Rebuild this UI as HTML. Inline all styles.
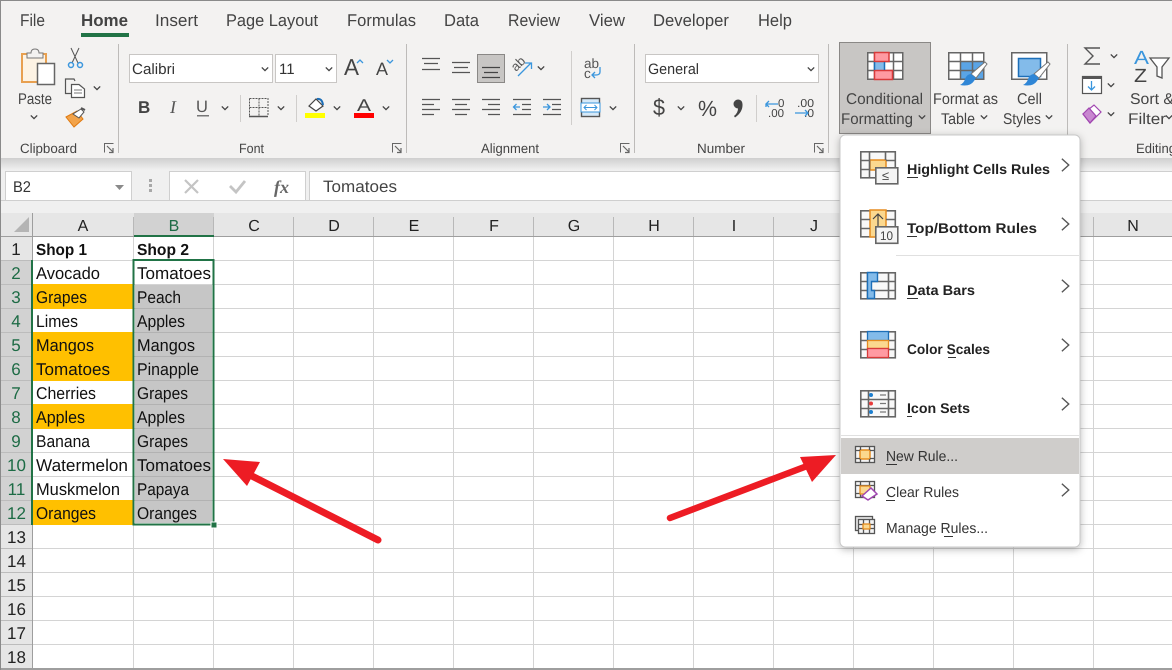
<!DOCTYPE html>
<html><head><meta charset="utf-8"><style>
html,body{margin:0;padding:0;background:#fff;width:1172px;height:670px;overflow:hidden}
svg{display:block}
text{font-family:"Liberation Sans",sans-serif}
</style></head><body>
<svg width="1172" height="670" viewBox="0 0 1172 670" xmlns="http://www.w3.org/2000/svg" text-rendering="geometricPrecision">
<defs>
<linearGradient id="sh" x1="0" y1="0" x2="0" y2="1"><stop offset="0" stop-color="#cfcfcf"/><stop offset="1" stop-color="#f0f0f0"/></linearGradient>
<filter id="ds" x="-10%" y="-10%" width="120%" height="120%"><feDropShadow dx="0" dy="2" stdDeviation="4" flood-color="#000" flood-opacity=".28"/></filter>
<path id="c" d="M-3.200-1.600L0 1.600L3.200-1.600" fill="none" stroke="#444" stroke-width="1.300"/>
<path id="g" d="M-2.500-5L3 0L-2.500 5" fill="none" stroke="#555" stroke-width="1.100" transform="scale(1.25)"/>
<g id="dl" fill="none" stroke="#666"><path d="M.5 9.500V.5H9.500" stroke-width="1"/><path d="M3 3L9 9M9 5V9.500H5" stroke-width="1.200"/></g>
</defs>

<!-- page backgrounds -->
<rect width="1172" height="670" fill="#fff"/>
<rect x="0" y="0" width="1172" height="158" fill="#f3f2f1"/>
<rect x="0" y="158" width="1172" height="12" fill="url(#sh)"/>
<rect x="0" y="170" width="1172" height="43" fill="#f0f0f0"/>

<!-- tabs -->
<g font-size="17" fill="#444">
<text x="20" y="26" textLength="25" lengthAdjust="spacingAndGlyphs">File</text>
<text x="81" y="26" textLength="47" lengthAdjust="spacingAndGlyphs" font-weight="700">Home</text>
<text x="155" y="26" textLength="43" lengthAdjust="spacingAndGlyphs">Insert</text>
<text x="226" y="26" textLength="92" lengthAdjust="spacingAndGlyphs">Page Layout</text>
<text x="347" y="26" textLength="69" lengthAdjust="spacingAndGlyphs">Formulas</text>
<text x="444" y="26" textLength="35" lengthAdjust="spacingAndGlyphs">Data</text>
<text x="508" y="26" textLength="52" lengthAdjust="spacingAndGlyphs">Review</text>
<text x="589" y="26" textLength="36" lengthAdjust="spacingAndGlyphs">View</text>
<text x="653" y="26" textLength="76" lengthAdjust="spacingAndGlyphs">Developer</text>
<text x="758" y="26" textLength="34" lengthAdjust="spacingAndGlyphs">Help</text>
</g>
<rect x="81" y="33" width="48" height="4" fill="#217346"/>

<!-- group separators -->
<g fill="#bdbbb9">
<rect x="118" y="44" width="1" height="109"/><rect x="406" y="44" width="1" height="109"/>
<rect x="634" y="44" width="1" height="109"/><rect x="828" y="44" width="1" height="109"/>
<rect x="1067" y="44" width="1" height="109"/>
<rect x="240" y="95" width="1" height="27" fill="#d0cecc"/><rect x="296" y="95" width="1" height="27" fill="#d0cecc"/>
<rect x="571" y="51" width="1" height="74" fill="#d0cecc"/><rect x="756" y="95" width="1" height="27" fill="#d0cecc"/>
</g>

<!-- group labels -->
<g font-size="13.500" fill="#444">
<text x="20" y="153" textLength="57" lengthAdjust="spacingAndGlyphs">Clipboard</text>
<text x="239" y="153" textLength="25" lengthAdjust="spacingAndGlyphs">Font</text>
<text x="481" y="153" textLength="58" lengthAdjust="spacingAndGlyphs">Alignment</text>
<text x="697" y="153" textLength="48" lengthAdjust="spacingAndGlyphs">Number</text>
<text x="1136" y="153" textLength="40" lengthAdjust="spacingAndGlyphs">Editing</text>
</g>
<use href="#dl" x="104" y="143"/><use href="#dl" x="392" y="143"/><use href="#dl" x="620" y="143"/><use href="#dl" x="814" y="143"/>

<!-- clipboard group -->
<rect x="22" y="54" width="24" height="28" fill="#fdf3e4" stroke="#e8a050" stroke-width="2"/>
<path d="M27 58V53H31Q31 49 35 49Q39 49 39 53H43V58Z" fill="#f3f2f1" stroke="#777" stroke-width="1"/>
<rect x="37.500" y="63.500" width="17" height="21" fill="#fff" stroke="#666" stroke-width="1.500"/>
<text x="18" y="104" font-size="15.500" fill="#444" textLength="34" lengthAdjust="spacingAndGlyphs">Paste</text>
<use href="#c" x="34" y="117"/>
<g fill="none">
<path d="M71 48L78 63M79 48L72 63" stroke="#555" stroke-width="1"/>
<circle cx="71" cy="65" r="2.500" stroke="#3a96dd" stroke-width="1.500"/><circle cx="80" cy="65" r="2.500" stroke="#3a96dd" stroke-width="1.500"/>
<path d="M72.500 93.500H65.500V79H74L75 81" stroke="#555" stroke-width="1.200" fill="#f3f2f1"/>
<path d="M71.500 84.500H79L84.500 89V97.500H71.500Z" stroke="#555" stroke-width="1.200" fill="#fff"/>
<path d="M74 90H82M74 93H82" stroke="#777"/>
</g>
<use href="#c" x="97" y="88"/>
<path d="M66 117L77 111L83 119L74 127Z" fill="#f2a34a" stroke="#e07a10" stroke-width="1"/>
<path d="M73 114L81 109L84 112L79 118Z" fill="#fff" stroke="#555"/>
<path d="M81 108L85 110" stroke="#555" stroke-width="2"/>

<!-- font group -->
<rect x="129.500" y="54.500" width="143" height="28" fill="#fff" stroke="#c8c6c4"/>
<rect x="275.500" y="54.500" width="61" height="28" fill="#fff" stroke="#c8c6c4"/>
<text x="132" y="74" font-size="15" fill="#333" textLength="43" lengthAdjust="spacingAndGlyphs">Calibri</text>
<text x="279" y="74" font-size="15" fill="#333">11</text>
<use href="#c" x="265" y="69"/><use href="#c" x="329" y="69"/>
<text x="344" y="75" font-size="23" fill="#444" textLength="15" lengthAdjust="spacingAndGlyphs">A</text>
<text x="376" y="75" font-size="18" fill="#444" textLength="12" lengthAdjust="spacingAndGlyphs">A</text>
<path d="M357 63L360 60L363 63" fill="none" stroke="#3a96dd" stroke-width="1.300"/>
<path d="M387 60L390 63L393 60" fill="none" stroke="#3a96dd" stroke-width="1.300"/>
<text x="138" y="113" font-size="17" font-weight="700" fill="#444">B</text>
<text x="170" y="113" font-size="18" font-style="italic" fill="#555" style="font-family:'Liberation Serif',serif">I</text>
<text x="196" y="112" font-size="16.500" fill="#555">U</text>
<rect x="197" y="115" width="12" height="1.500" fill="#777"/>
<use href="#c" x="225" y="108"/>
<g stroke="#555" fill="none">
<path d="M249.500 98.500H268V116M249.500 98.500V116M259 98.500V116M249.500 107.500H268" stroke-dasharray="2 1"/>
<path d="M249 116.500H268" stroke-width="1.500"/>
</g>
<use href="#c" x="281" y="108"/>
<path d="M309 106L316 99L323 106L316 111Z" fill="#fff" stroke="#444" stroke-width="1.200"/>
<path d="M317 99Q322 98 323 105" fill="none" stroke="#1d6fb8" stroke-width="2"/>
<rect x="305" y="113" width="20" height="5" fill="#ff0"/>
<use href="#c" x="337" y="108"/>
<text x="357" y="111" font-size="17" fill="#444" textLength="14" lengthAdjust="spacingAndGlyphs">A</text>
<rect x="354" y="113" width="20" height="5" fill="#f00"/>
<use href="#c" x="386" y="108"/>

<!-- alignment group -->
<g stroke="#555" stroke-width="1.300" fill="none">
<path d="M422 58.500H440M424 63.500H438M422 69.500H440"/>
<path d="M452 62.500H470M454 67.500H468M452 72.500H470"/>
</g>
<rect x="477.500" y="54.500" width="27" height="28" fill="#c8c6c4" stroke="#8a8886"/>
<path d="M482 67.500H500M484 72.500H498M482 77.500H500" stroke="#444" stroke-width="1.300"/>
<text x="0" y="0" font-size="13" fill="#555" transform="translate(516,72) rotate(-45)">ab</text>
<path d="M518 76L531 63M525 63H531.500V69" fill="none" stroke="#3a96dd" stroke-width="1.300"/>
<use href="#c" x="541" y="68"/>
<text x="584" y="68" font-size="13.500" fill="#555">ab</text>
<text x="584" y="78" font-size="13.500" fill="#555">c</text>
<path d="M600 67V72Q600 75 596 75H592M595 72L592 75L595 78" fill="none" stroke="#3a96dd" stroke-width="1.300"/>
<g stroke="#555" stroke-width="1.300" fill="none">
<path d="M422 99.500H440M422 104.500H434M422 109.500H440M422 114.500H434"/>
<path d="M452 99.500H470M455 104.500H467M452 109.500H470M455 114.500H467"/>
<path d="M482 99.500H500M488 104.500H500M482 109.500H500M488 114.500H500"/>
<path d="M513 99.500H531M522 104.500H531M522 109.500H531M513 114.500H531"/>
<path d="M543 99.500H561M552 104.500H561M552 109.500H561M543 114.500H561"/>
</g>
<path d="M520 107H513.500M516.500 104L513.500 107L516.500 110" fill="none" stroke="#3a96dd" stroke-width="1.300"/>
<path d="M543 107H550M547 104L550 107L547 110" fill="none" stroke="#3a96dd" stroke-width="1.300"/>
<rect x="581.500" y="98.500" width="18" height="18" fill="#d6e9f8" stroke="#555" stroke-width="1.400"/>
<rect x="581" y="103" width="19" height="9" fill="#fff" stroke="#3a96dd"/>
<path d="M584 107.500H597M586.500 105L584 107.500L586.500 110M594.500 105L597 107.500L594.500 110" fill="none" stroke="#3a96dd"/>
<use href="#c" x="613" y="108"/>

<!-- number group -->
<rect x="645.500" y="54.500" width="173" height="28" fill="#fff" stroke="#c8c6c4"/>
<text x="648" y="74" font-size="15" fill="#333" textLength="51" lengthAdjust="spacingAndGlyphs">General</text>
<use href="#c" x="811" y="69"/>
<text x="653" y="115" font-size="23" fill="#444" textLength="12" lengthAdjust="spacingAndGlyphs">$</text>
<use href="#c" x="681" y="108"/>
<text x="698" y="116" font-size="22" fill="#444" textLength="19" lengthAdjust="spacingAndGlyphs">%</text>
<path d="M738 99.500A4.300 4.300 0 0 1 742.500 104Q743 112 735 117.500L734 116Q738 113 738 108.500A4.500 4.500 0 0 1 738 99.500Z" fill="#444"/>
<g font-size="11.500" fill="#444">
<text x="778" y="107">0</text><text x="768" y="117" textLength="16" lengthAdjust="spacingAndGlyphs">.00</text>
<text x="797" y="107" textLength="17" lengthAdjust="spacingAndGlyphs">.00</text><text x="804" y="117" textLength="10" lengthAdjust="spacingAndGlyphs">.0</text>
</g>
<path d="M778 104H766M769 101L766 104L769 107M766 104V107" fill="none" stroke="#3a96dd" stroke-width="1.300"/>
<path d="M795 113H808M805 110L808 113L805 116" fill="none" stroke="#3a96dd" stroke-width="1.300"/>

<!-- conditional formatting -->
<rect x="839.500" y="42.500" width="91" height="91" fill="#c8c6c4" stroke="#8a8886"/>
<rect x="868" y="53" width="34" height="26" fill="#fff"/>
<g stroke="#666" stroke-width="1.500" fill="none">
<rect x="867.750" y="52.750" width="35" height="26.500"/>
<path d="M867 61.500H903M867 70.500H903M874.500 52V80M893.500 52V80"/>
</g>
<rect x="874.500" y="62" width="10" height="8" fill="#83bbea"/>
<path d="M874.500 52.500H889V61.500H874.500Z" fill="#ff9aa2" stroke="#d83b3b" stroke-width="1.500"/>
<path d="M874.500 70.500H892.500V79.500H874.500Z" fill="#ff9aa2" stroke="#d83b3b" stroke-width="1.500"/>
<path d="M874.500 62V70M884.500 62V70" fill="none" stroke="#1d6fb8" stroke-width="1.500"/>
<g font-size="15.500" fill="#444">
<text x="846" y="104" textLength="77" lengthAdjust="spacingAndGlyphs">Conditional</text>
<text x="841" y="124" textLength="72" lengthAdjust="spacingAndGlyphs">Formatting</text>
<text x="933" y="104" textLength="65" lengthAdjust="spacingAndGlyphs">Format as</text>
<text x="941" y="124" textLength="34" lengthAdjust="spacingAndGlyphs">Table</text>
<text x="1017" y="104" textLength="25" lengthAdjust="spacingAndGlyphs">Cell</text>
<text x="1003" y="124" textLength="38" lengthAdjust="spacingAndGlyphs">Styles</text>
<text x="1130" y="104" textLength="44" lengthAdjust="spacingAndGlyphs">Sort &amp;</text>
<text x="1128" y="124" textLength="38" lengthAdjust="spacingAndGlyphs">Filter</text>
</g>
<use href="#c" x="922" y="117"/><use href="#c" x="984" y="117"/><use href="#c" x="1049" y="117"/><use href="#c" x="1169" y="117"/>

<!-- format as table icon -->
<rect x="949" y="53" width="34" height="26" fill="#fff"/>
<rect x="960" y="62" width="24" height="18" fill="#5aa4e6"/>
<g stroke="#666" stroke-width="1.500" fill="none"><rect x="948.750" y="52.750" width="35" height="26.500"/><path d="M948 61.500H984M948 70.500H984M960.500 52V80M972.500 52V80"/></g>
<path d="M985 62L987 64L976 78L971 74Z" fill="#fff" stroke="#777"/>
<path d="M971 74Q967 74 965 79Q964 83 960 85Q970 87 974 81L976 78Z" fill="#2f86d6"/>
<!-- cell styles icon -->
<rect x="1012" y="53" width="34" height="26" fill="#fff"/>
<rect x="1018.500" y="58.500" width="22" height="18" fill="#83bbea" stroke="#1d6fb8" stroke-width="1.500"/>
<rect x="1011.750" y="52.750" width="35" height="26.500" fill="none" stroke="#666" stroke-width="1.500"/>
<path d="M1048 62L1050 64L1039 78L1034 74Z" fill="#fff" stroke="#777"/>
<path d="M1034 74Q1030 74 1028 79Q1027 83 1023 85Q1033 87 1037 81L1039 78Z" fill="#2f86d6"/>

<!-- editing -->
<path d="M1100 48H1085L1093 56L1085 64H1100" fill="none" stroke="#555" stroke-width="1.400"/>
<use href="#c" x="1114" y="56"/>
<rect x="1082.500" y="76.500" width="19" height="17" fill="#fff" stroke="#555" stroke-width="1.200"/>
<rect x="1082" y="76" width="20" height="3" fill="#555"/>
<path d="M1091.500 81V90M1088 86.500L1091.500 90L1095 86.500" fill="none" stroke="#3a96dd" stroke-width="1.300"/>
<use href="#c" x="1111" y="85"/>
<path d="M1083 114L1094 105L1101 112L1090 123Z" fill="#fff" stroke="#a046b0" stroke-width="1.200"/>
<path d="M1083 114L1089 108L1096 116L1090 123Z" fill="#c887d0" stroke="#a046b0" stroke-width="1.200"/>
<use href="#c" x="1111" y="114"/>
<text x="1134" y="64" font-size="19" fill="#3a96dd" textLength="15" lengthAdjust="spacingAndGlyphs">A</text>
<text x="1134" y="82" font-size="19" fill="#444" textLength="13" lengthAdjust="spacingAndGlyphs">Z</text>
<path d="M1150 58H1169L1162 67V78L1157 76V67Z" fill="#fff" stroke="#555" stroke-width="1.300"/>

<!-- formula bar -->
<rect x="5.500" y="171.500" width="126" height="29" fill="#fff" stroke="#cfcfcf"/>
<text x="13" y="192" font-size="15.500" fill="#333" textLength="18" lengthAdjust="spacingAndGlyphs">B2</text>
<path d="M115 185H124L119.500 190Z" fill="#8a8a8a"/>
<g fill="#a8a8a8"><rect x="149" y="179" width="3" height="3"/><rect x="149" y="184" width="3" height="3"/><rect x="149" y="189" width="3" height="3"/></g>
<rect x="169.500" y="171.500" width="136" height="29" fill="#fff" stroke="#cfcfcf"/>
<rect x="309.500" y="171.500" width="863" height="29" fill="#fff" stroke="#cfcfcf"/>
<path d="M185 180L198 193M198 180L185 193" stroke="#c4c4c4" stroke-width="2.200"/>
<path d="M230 186L236 192L245 181" fill="none" stroke="#c4c4c4" stroke-width="2.800"/>
<text x="274" y="193" font-size="18" font-style="italic" font-weight="700" fill="#666" style="font-family:'Liberation Serif',serif">fx</text>
<text x="323" y="192" font-size="16.500" fill="#444" textLength="74" lengthAdjust="spacingAndGlyphs">Tomatoes</text>
<rect x="0" y="200" width="1172" height="1" fill="#cfcfcf"/>

<!-- headers -->
<rect x="0" y="213" width="1172" height="24" fill="#e6e6e6"/>
<rect x="0" y="237" width="33" height="432" fill="#e6e6e6"/>
<rect x="134" y="213" width="80" height="23" fill="#d2d2d2"/>
<rect x="0" y="261" width="33" height="264" fill="#d2d2d2"/>
<path d="M29 217V232H14Z" fill="#b4b4b4"/>

<rect x="135" y="285" width="77" height="238" fill="#c6c6c6"/>

<!-- grid -->
<g stroke="#d4d4d4" stroke-width="1">
<path d="M33 260.500H1172M33 284.500H1172M33 308.500H1172M33 332.500H1172M33 356.500H1172M33 380.500H1172M33 404.500H1172M33 428.500H1172M33 452.500H1172M33 476.500H1172M33 500.500H1172M33 524.500H1172M33 548.500H1172M33 572.500H1172M33 596.500H1172M33 620.500H1172M33 644.500H1172"/>
<path d="M133.500 237V669M213.500 237V669M293.500 237V669M373.500 237V669M453.500 237V669M533.500 237V669M613.500 237V669M693.500 237V669M773.500 237V669M853.500 237V669M933.500 237V669M1013.500 237V669M1093.500 237V669"/>
</g>
<path d="M135 308.500H212M135 332.500H212M135 356.500H212M135 380.500H212M135 404.500H212M135 428.500H212M135 452.500H212M135 476.500H212M135 500.500H212" stroke="#b2b2b2"/>
<!-- orange cells cover gridlines -->
<g fill="#ffc000">
<rect x="33" y="284" width="100" height="25"/><rect x="33" y="332" width="100" height="49"/>
<rect x="33" y="404" width="100" height="25"/><rect x="33" y="500" width="100" height="25"/>
</g>
<!-- header separators -->
<path d="M133.500 217V236M213.500 217V236M293.500 217V236M373.500 217V236M453.500 217V236M533.500 217V236M613.500 217V236M693.500 217V236M773.500 217V236M853.500 217V236M933.500 217V236M1013.500 217V236M1093.500 217V236" stroke="#b8b8b8"/>
<path d="M0 260.500H32M0 284.500H32M0 308.500H32M0 332.500H32M0 356.500H32M0 380.500H32M0 404.500H32M0 428.500H32M0 452.500H32M0 476.500H32M0 500.500H32M0 524.500H32M0 548.500H32M0 572.500H32M0 596.500H32M0 620.500H32M0 644.500H32" stroke="#bcbcbc"/>
<rect x="0" y="236" width="1172" height="1" fill="#9e9e9e"/>
<rect x="32" y="213" width="1" height="456" fill="#9e9e9e"/>
<rect x="134" y="235" width="80" height="2" fill="#217346"/>
<rect x="31" y="260" width="2" height="265" fill="#217346"/>

<!-- column letters -->
<g font-size="16" fill="#222" text-anchor="middle">
<text x="83" y="231">A</text><text x="174" y="231" fill="#1d6b45">B</text><text x="254" y="231">C</text><text x="334" y="231">D</text><text x="414" y="231">E</text><text x="494" y="231">F</text><text x="574" y="231">G</text><text x="654" y="231">H</text><text x="734" y="231">I</text><text x="814" y="231">J</text><text x="1133" y="231">N</text>
</g>
<!-- row numbers -->
<g font-size="17" fill="#222" text-anchor="middle">
<text x="16" y="255">1</text>
<g fill="#1d6b45"><text x="16" y="279">2</text><text x="16" y="303">3</text><text x="16" y="327">4</text><text x="16" y="351">5</text><text x="16" y="375">6</text><text x="16" y="399">7</text><text x="16" y="423">8</text><text x="16" y="447">9</text><text x="16.500" y="471">10</text><text x="16.500" y="495">11</text><text x="16.500" y="519">12</text></g>
<text x="16.500" y="543">13</text><text x="16.500" y="567">14</text><text x="16.500" y="591">15</text><text x="16.500" y="615">16</text><text x="16.500" y="639">17</text><text x="16.500" y="663">18</text>
</g>

<!-- cells -->
<g font-size="17" fill="#111">
<text x="36" y="255" font-weight="700" font-size="16" textLength="51" lengthAdjust="spacingAndGlyphs">Shop 1</text>
<text x="137" y="255" font-weight="700" font-size="16" textLength="52" lengthAdjust="spacingAndGlyphs">Shop 2</text>
<text x="36" y="279" textLength="64" lengthAdjust="spacingAndGlyphs">Avocado</text>
<text x="36" y="303" textLength="51" lengthAdjust="spacingAndGlyphs">Grapes</text>
<text x="36" y="327" textLength="42" lengthAdjust="spacingAndGlyphs">Limes</text>
<text x="36" y="351" textLength="58" lengthAdjust="spacingAndGlyphs">Mangos</text>
<text x="36" y="375" textLength="74" lengthAdjust="spacingAndGlyphs">Tomatoes</text>
<text x="36" y="399" textLength="60" lengthAdjust="spacingAndGlyphs">Cherries</text>
<text x="36" y="423" textLength="49" lengthAdjust="spacingAndGlyphs">Apples</text>
<text x="36" y="447" textLength="54" lengthAdjust="spacingAndGlyphs">Banana</text>
<text x="36" y="471" textLength="92" lengthAdjust="spacingAndGlyphs">Watermelon</text>
<text x="36" y="495" textLength="84" lengthAdjust="spacingAndGlyphs">Muskmelon</text>
<text x="36" y="519" textLength="60" lengthAdjust="spacingAndGlyphs">Oranges</text>
<text x="137" y="279" textLength="74" lengthAdjust="spacingAndGlyphs">Tomatoes</text>
<text x="137" y="303" textLength="44" lengthAdjust="spacingAndGlyphs">Peach</text>
<text x="137" y="327" textLength="48" lengthAdjust="spacingAndGlyphs">Apples</text>
<text x="137" y="351" textLength="58" lengthAdjust="spacingAndGlyphs">Mangos</text>
<text x="137" y="375" textLength="62" lengthAdjust="spacingAndGlyphs">Pinapple</text>
<text x="137" y="399" textLength="51" lengthAdjust="spacingAndGlyphs">Grapes</text>
<text x="137" y="423" textLength="48" lengthAdjust="spacingAndGlyphs">Apples</text>
<text x="137" y="447" textLength="51" lengthAdjust="spacingAndGlyphs">Grapes</text>
<text x="137" y="471" textLength="74" lengthAdjust="spacingAndGlyphs">Tomatoes</text>
<text x="137" y="495" textLength="52" lengthAdjust="spacingAndGlyphs">Papaya</text>
<text x="137" y="519" textLength="60" lengthAdjust="spacingAndGlyphs">Oranges</text>
</g>

<!-- selection -->
<rect x="133.500" y="260" width="80" height="264.500" fill="none" stroke="#217346" stroke-width="2"/>
<rect x="211" y="522" width="6" height="6" fill="#217346" stroke="#fff" stroke-width="1"/>

<!-- bottom line -->
<rect x="0" y="668" width="1172" height="2" fill="#9e9e9e"/>
<!-- outer edges -->
<rect x="0" y="0" width="1172" height="1" fill="#8a8a8a"/>
<rect x="0" y="0" width="1" height="670" fill="#8a8a8a"/>

<!-- arrows -->
<path d="M378 540L242 471" stroke="#ed1c24" stroke-width="7" stroke-linecap="round" fill="none"/>
<path d="M223 459L260 462L247 486Z" fill="#ed1c24"/>
<path d="M670 518L815 463" stroke="#ed1c24" stroke-width="6.500" stroke-linecap="round" fill="none"/>
<path d="M836 455L800 457L812 482Z" fill="#ed1c24"/>

<!-- menu -->
<rect x="840" y="135" width="240" height="412" rx="5" fill="#fff" stroke="#c8c8c8" filter="url(#ds)"/>
<rect x="896" y="255" width="183" height="1" fill="#e0e0e0"/>
<rect x="841" y="435" width="238" height="1" fill="#e0e0e0"/>
<rect x="841" y="438" width="238" height="36" fill="#cfcdcb"/>

<!-- highlight icon -->
<g stroke="#666" stroke-width="1.600" fill="#f8f8f8">
<rect x="860.800" y="151.800" width="34.500" height="26"/>
<rect x="870" y="160" width="16" height="10" fill="#fbd88f" stroke="#e58c20" stroke-width="1.500"/>
<path d="M860 160.500H870M860 169.500H870M886 160.500H895M869.500 151V178M885.500 151V160" fill="none"/>
<rect x="875.800" y="167.800" width="22" height="16" fill="#f4f4f4"/>
</g>
<text x="882" y="180" font-size="13" fill="#444">≤</text>
<!-- top bottom icon -->
<g stroke="#666" stroke-width="1.600" fill="#f8f8f8">
<rect x="860.800" y="210.800" width="34.500" height="26"/>
<rect x="870" y="210" width="16" height="27" fill="#fbd88f" stroke="#e58c20" stroke-width="1.500"/>
<path d="M860 219.500H870M860 228.500H870M886 219.500H895M886 228.500H895" fill="none"/>
<rect x="875.800" y="226.800" width="22" height="16.500" fill="#f4f4f4"/>
</g>
<path d="M878 226V214M873 219L878 214L883 219" fill="none" stroke="#444" stroke-width="1.200"/>
<text x="880" y="240" font-size="12.500" fill="#444" textLength="13" lengthAdjust="spacingAndGlyphs">10</text>
<!-- data bars icon -->
<g stroke="#666" stroke-width="1.600" fill="#f8f8f8">
<rect x="860.800" y="272.800" width="34.500" height="26"/>
<path d="M860 281.500H895M860 290.500H895M867.500 272V299M888.500 272V299" fill="none"/>
</g>
<path d="M867.500 272.500H877.500V281.500H871.500V290.500H874.500V298.500H867.500Z" fill="#83bbea" stroke="#1d6fb8" stroke-width="1.400"/>
<!-- color scales icon -->
<g stroke="#666" stroke-width="1.600" fill="#f8f8f8">
<rect x="860.800" y="331.800" width="34.500" height="26"/>
<path d="M860 340.500H895M860 349.500H895" fill="none"/>
</g>
<rect x="867.500" y="331.500" width="21" height="9" fill="#83bbea" stroke="#1d6fb8" stroke-width="1.300"/>
<rect x="867.500" y="340.500" width="21" height="8" fill="#fbd88f" stroke="#e58c20" stroke-width="1.300"/>
<rect x="867.500" y="348.500" width="21" height="9" fill="#ff9aa2" stroke="#d83b3b" stroke-width="1.300"/>
<!-- icon sets icon -->
<g stroke="#666" stroke-width="1.600" fill="#f8f8f8">
<rect x="860.800" y="390.800" width="34.500" height="26"/>
<path d="M860 399.500H895M860 408.500H895M868.500 390V417M888.500 390V417" fill="none"/>
</g>
<circle cx="871" cy="395" r="2" fill="#1d7fd0"/><circle cx="871" cy="403.500" r="2" fill="#e83b3b"/><circle cx="871" cy="412" r="2" fill="#1d7fd0"/>
<path d="M880 395H886M880 403.500H886M880 412H886" stroke="#777" stroke-width="1.200"/>

<g font-size="14" font-weight="700" fill="#222">
<text x="907" y="174" textLength="143" lengthAdjust="spacingAndGlyphs">Highlight Cells Rules</text>
<text x="907" y="233" textLength="130" lengthAdjust="spacingAndGlyphs">Top/Bottom Rules</text>
<text x="907" y="295" textLength="68" lengthAdjust="spacingAndGlyphs">Data Bars</text>
<text x="907" y="354" textLength="83" lengthAdjust="spacingAndGlyphs">Color Scales</text>
<text x="907" y="413" textLength="63" lengthAdjust="spacingAndGlyphs">Icon Sets</text>
</g>
<g fill="#333">
<rect x="907" y="177" width="11" height="1"/><rect x="907" y="236" width="10" height="1"/><rect x="907" y="298" width="11" height="1"/><rect x="948" y="357" width="8" height="1"/><rect x="907" y="416" width="5" height="1"/>
<rect x="886" y="464" width="11" height="1"/><rect x="886" y="500" width="9" height="1"/><rect x="944" y="536" width="9" height="1"/>
</g>
<g font-size="14.500" fill="#333">
<text x="886" y="461" textLength="72" lengthAdjust="spacingAndGlyphs">New Rule...</text>
<text x="886" y="497" textLength="73" lengthAdjust="spacingAndGlyphs">Clear Rules</text>
<text x="886" y="533" textLength="102" lengthAdjust="spacingAndGlyphs">Manage Rules...</text>
</g>
<use href="#g" x="1065" y="165"/><use href="#g" x="1065" y="224"/><use href="#g" x="1065" y="286"/><use href="#g" x="1065" y="345"/><use href="#g" x="1065" y="404"/><use href="#g" x="1065" y="490"/>

<!-- small menu icons -->
<g stroke="#555" stroke-width="1.300" fill="#f4f4f4">
<rect x="855.500" y="446.500" width="19" height="16"/>
<rect x="860" y="450" width="10" height="9" fill="#fbd88f" stroke="#e58c20" stroke-width="1.500"/>
<path d="M855 450.500H860M855 458.500H860M870 450.500H875M870 458.500H875M860.500 446V450M869.500 446V450M860.500 459V463M869.500 459V463" fill="none"/>
<rect x="855.500" y="481.500" width="19" height="16"/>
<path d="M855 485.500H875M855 493.500H875M860.500 481V498M869.500 481V498" fill="none"/>
<rect x="860" y="486" width="10" height="8" fill="#fbd88f" stroke="#e58c20"/>
<path d="M862 496L871 488L877 494L868 500Z" fill="#fff" stroke="#a046b0" stroke-width="1.500"/>
<rect x="855.500" y="516.500" width="17" height="14" fill="#e8e8e8"/>
<rect x="858.500" y="519.500" width="16" height="14"/>
<path d="M858 524.500H875M858 528.500H875M863.500 519V534M869.500 519V534" fill="none"/>
<rect x="863" y="524" width="7" height="5" fill="#fbd88f" stroke="#e58c20"/>
</g>
</svg>
</body></html>
